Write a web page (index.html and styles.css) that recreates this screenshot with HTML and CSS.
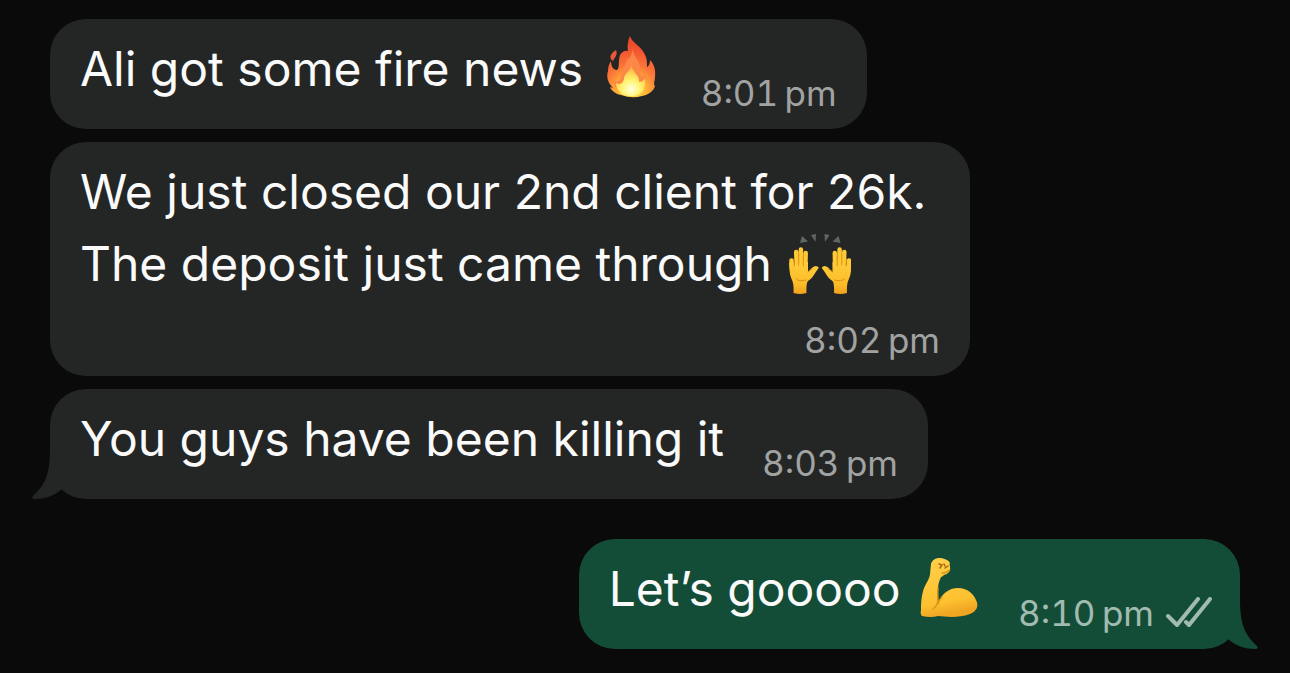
FILE: index.html
```html
<!DOCTYPE html>
<html lang="en">
  <head>
    <meta charset="UTF-8" />
    <meta name="viewport" content="width=device-width, initial-scale=1.0" />
    <title>Chat</title>
    <link rel="stylesheet" href="styles.css">
  </head>
  <body>
    <main class="chat">
      <div class="message">
        <p class="text">Ali got some fire news <svg class="emoji" viewBox="0 0 64 64" role="img" aria-label="fire">
            <defs>
              <radialGradient id="flame" gradientUnits="userSpaceOnUse" cx="33" cy="57" r="48">
                <stop offset="0" stop-color="#ffe94a" />
                <stop offset="0.3" stop-color="#ffb338" />
                <stop offset="0.6" stop-color="#fb7138" />
                <stop offset="1" stop-color="#ee4a2c" />
              </radialGradient>
              <radialGradient id="core" gradientUnits="userSpaceOnUse" cx="32" cy="54" r="24">
                <stop offset="0" stop-color="#ffffe0" />
                <stop offset="0.4" stop-color="#fff36a" />
                <stop offset="1" stop-color="#ffa43c" />
              </radialGradient>
            </defs>
            <path fill="url(#flame)" d="M31 1C33 8 41 10 45 18C48 23 48 26 48 32C50 31 51 28 51 25C55 29 57 35 56 42C56 46 54 49 56 51C55 56 49 60 43 61Q33 64 22 60C16 59 12 55 11 52L14 53C9 48 7 42 9 36C9 32 10 29 12 26C12 31 14 35 18 35C21 33 19 26 21 20C23 16 27 15 29 16C28 11 29 5 31 1Z" />
            <path fill="#e9583c" d="M17 15C19 20 16 22 14 26C9 23 12 18 17 15Z" />
            <path fill="#fc8847" d="M34 13C33 22 42 25 41 35C40 40 43 43 47 40C48 49 43 58 33 60C22 61 15 55 15 45C17 48 21 47 22 42C23 34 26 32 28 25Q33 22 34 13Z" />
            <path fill="url(#core)" d="M33 30C32 37 41 39 40 47C43 47 45 45 46 43C48 54 42 61 33 61C23 62 17 56 17 48C20 50 24 49 25 44C25 38 31 37 33 30Z" />
          </svg></p>
        <time class="time" datetime="20:01">8:01&#8201;pm</time>
      </div>

      <div class="message">
        <p class="text">We just closed our 2nd client for 26k. The deposit just came through <svg class="emoji" viewBox="-1 -4 64 64" role="img" aria-label="raised hands">
            <defs>
              <linearGradient id="skin" x1="0" y1="0" x2="0" y2="1">
                <stop offset="0" stop-color="#ffce3b" />
                <stop offset="0.7" stop-color="#fdbb27" />
                <stop offset="1" stop-color="#efa11d" />
              </linearGradient>
              <g id="hand">
                <path fill="none" stroke="#ffc934" stroke-width="4.500" stroke-linecap="round" d="M3.500 26.500L4.500 40M8.200 18L9 38M12.900 15.500L13 38M17.700 19L17.200 38" />
                <path fill="url(#skin)" d="M1.200 28L4 32L20 28V38C22 36 25 32 28 32Q32 33 30 35C26 40 25 44 20 47Q18 49 18.500 59Q12 61 5.500 59Q6 50 4 46Q1 40 1.200 28Z" />
                <path fill="none" stroke="#dc911a" stroke-width="1" stroke-linecap="round" d="M6 25L6.500 32M10.700 20V31M15.300 22V32M8 45Q11 48 18 46M20 38Q22 36 24 35" />
              </g>
            </defs>
            <use href="#hand" />
            <use href="#hand" transform="matrix(-1 0 0 1 64.500 0)" />
            <path fill="#626564" d="M14 2L20 7.500L12 9ZM23 1L28 0L27.500 8ZM36.500 0L41.500 1L37 8ZM50.500 2L52.500 9L44.500 7.500Z" />
          </svg></p>
        <time class="time" datetime="20:02">8:02&#8201;pm</time>
      </div>

      <div class="message">
        <p class="text">You guys have been killing it</p>
        <time class="time" datetime="20:03">8:03&#8201;pm</time>
        <svg class="tail" viewBox="0 0 36 50" aria-hidden="true">
          <path d="M18 0C18 24 14 35 1 47Q-1 50 3 50Q18 50 29 41L36 30V0Z" />
        </svg>
      </div>

      <div class="message sent">
        <p class="text">Let’s gooooo <svg class="emoji" viewBox="0 0 64 64" role="img" aria-label="flexed arm">
            <defs>
              <linearGradient id="arm" x1="0" y1="0" x2="0.2" y2="1">
                <stop offset="0" stop-color="#ffd04a" />
                <stop offset="0.8" stop-color="#fdc130" />
                <stop offset="1" stop-color="#efa623" />
              </linearGradient>
            </defs>
            <path fill="url(#arm)" d="M15 9C16 5 20 3 23 3C27 3 33 5 34 8C33 9 34 10 34 12C35 16 32 19 28 20Q26 22 25 22C21 30 22 36 22 49C25 39 33 33 42 33C51 33 57 38 60 45C63 51 61 56 54 59C43 63 31 62 22 61Q15 63 6 61Q4 59 5 55C5 45 6 36 10 29Q14 22 14 19Z" />
            <path fill="none" stroke="#de951b" stroke-width="1.500" stroke-linecap="round" d="M22 33C21 40 23 45 21 49Q20 52 17 54M22 49Q23 45 26 42M33 15Q31 18 26 18" />
            <path fill="none" stroke="#a86611" stroke-width="1.500" stroke-linecap="round" d="M23 9L26 10L24 13M28 9L29 11M32 11L29 13" />
          </svg></p>
        <span class="status">
          <time class="time" datetime="20:10">8:10&#8201;pm</time>
          <svg class="checks" viewBox="0 0 46 32" role="img" aria-label="Delivered">
            <path d="M2 19L11 28L32 2M20 25L23 28L44 2" />
          </svg>
        </span>
        <svg class="tail" viewBox="0 0 36 50" aria-hidden="true">
          <path d="M18 0C18 24 14 35 1 47Q-1 50 3 50Q18 50 29 41L36 30V0Z" />
        </svg>
      </div>
    </main>
  </body>
</html>
```

FILE: styles.css
```css
* {
  box-sizing: border-box;
}

body {
  margin: 0;
  background-color: #0a0a0a;
  font-family: Inter, "Liberation Sans", sans-serif;
}

.chat {
  display: flex;
  flex-direction: column;
  align-items: flex-start;
  gap: 13px;
  padding: 19px 50px 23px;
}

.message {
  position: relative;
  display: flex;
  flex-wrap: wrap;
  align-items: flex-end;
  gap: 8px 38px;
  max-width: 920px;
  padding: 14px 30px;
  border-radius: 36px;
  background-color: #242626;
  color: #fafafa;
}

.sent {
  align-self: flex-end;
  margin-top: 27px;
  padding-right: 28px;
  background-color: #144d37;
}

.text {
  margin: 0;
  padding-bottom: 10px;
  font-size: 48px;
  line-height: 72px;
}

.emoji {
  width: 64px;
  height: 64px;
  margin-left: 2px;
  vertical-align: -13px;
}

.time {
  margin-left: auto;
  color: #a1a3a3;
  font-size: 35px;
  line-height: 44px;
  font-variant-numeric: tabular-nums;
  white-space: nowrap;
}

.status {
  display: flex;
  align-items: center;
  gap: 12px;
}

.sent .time {
  color: #a1bbb0;
}

.checks {
  width: 46px;
  height: 32px;
  fill: none;
  stroke: #a1bbb0;
  stroke-width: 4;
  stroke-linecap: round;
  stroke-linejoin: round;
}

/* tail sits over the bottom corner of the bubble */
.tail {
  position: absolute;
  bottom: 0;
  left: -18px;
  width: 36px;
  height: 50px;
  fill: #242626;
}

.sent .tail {
  right: -18px;
  left: auto;
  transform: scaleX(-1);
  fill: #144d37;
}
```
